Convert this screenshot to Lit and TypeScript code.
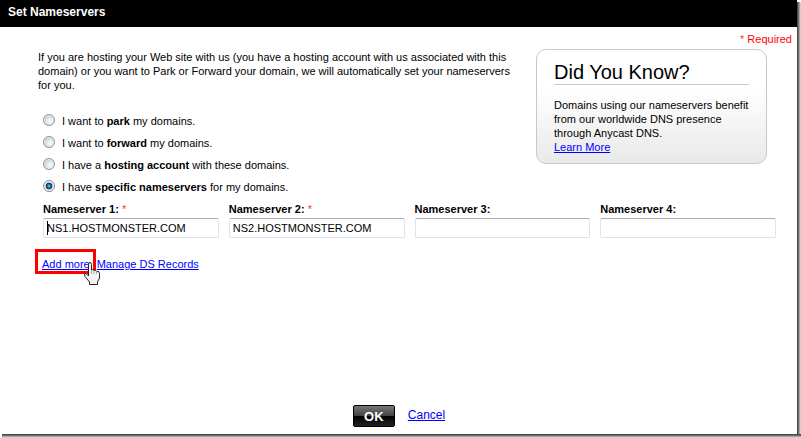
import { LitElement, html, css, nothing } from "lit";
import { customElement, state } from "lit/decorators.js";

interface Choice {
  id: string;
  before: string;
  strong: string;
  after: string;
}

interface Server {
  label: string;
  value: string;
  required: boolean;
}

const CHOICES: Choice[] = [
  { id: "park", before: "I want to ", strong: "park", after: " my domains." },
  { id: "forward", before: "I want to ", strong: "forward", after: " my domains." },
  { id: "hosting", before: "I have a ", strong: "hosting account", after: " with these domains." },
  { id: "specific", before: "I have ", strong: "specific nameservers", after: " for my domains." },
];

const SERVERS: Server[] = [
  { label: "Nameserver 1:", value: "NS1.HOSTMONSTER.COM", required: true },
  { label: "Nameserver 2:", value: "NS2.HOSTMONSTER.COM", required: true },
  { label: "Nameserver 3:", value: "", required: false },
  { label: "Nameserver 4:", value: "", required: false },
];

@customElement("app-root")
export class AppRoot extends LitElement {
  @state() private choice = "specific";

  static styles = css`
    :host {
      display: grid;
      grid-template: 1fr 4px / 1fr 4px;
      min-height: 100vh;
      background: #fff;
      color: #000;
      font: 11px/14px "Liberation Sans", Arial, sans-serif;
    }
    * {
      box-sizing: border-box;
    }
    a {
      color: #00f;
    }
    .window {
      display: flex;
      flex-direction: column;
      background: #fff;
    }
    .shade-right {
      margin-top: 2px;
      background: linear-gradient(90deg, #484848 0 1px, #6f6f6f 1px 2px, #a5a5a5 2px 3px, #d0d0d0 3px);
    }
    .shade-bottom {
      grid-column: 1 / 3;
      margin-left: 2px;
      background: linear-gradient(#484848 0 1px, #6f6f6f 1px 2px, #a5a5a5 2px 3px, #d0d0d0 3px);
    }
    .title {
      margin: 0;
      padding: 4px 8px 7px;
      background: #000;
      color: #fff;
      font-size: 12px;
      line-height: 16px;
    }
    .required-note {
      margin: 0;
      padding: 5px 5px 3px;
      text-align: right;
      color: #f00;
    }
    .star {
      color: #ff3c1e;
      font-weight: normal;
    }
    .top {
      display: flex;
      justify-content: space-between;
      gap: 16px;
      padding: 0 30px 0 38px;
    }
    .intro {
      flex: 1;
      max-width: 482px;
    }
    .intro p {
      margin: 1px 0 18px;
    }
    .choices {
      margin: 0;
      padding: 0 0 0 5px;
      border: 0;
    }
    .choice {
      display: flex;
      align-items: center;
      gap: 7px;
      height: 22px;
    }
    .choice input {
      appearance: none;
      flex: none;
      width: 12px;
      height: 12px;
      margin: 0 0 3px;
      border: 1px solid #8e8f8f;
      border-radius: 50%;
      background: radial-gradient(circle at 60% 60%, #f4f4f4 0 20%, #c4c8cc 70%);
      box-shadow: inset 0 0 0 1px #f4f4f4;
    }
    .choice input:checked {
      background: radial-gradient(circle at 50% 50%, #8fd8f5 0, #1d7ab4 22%, #0b2e4c 44%, #dfe3e6 52%);
    }
    .tip {
      flex: none;
      align-self: flex-start;
      width: 231px;
      padding: 10px 17px 9px;
      border: 1px solid #c8c8c8;
      border-radius: 10px;
      background: linear-gradient(#fff 35%, #e9e9e9);
    }
    .tip h2 {
      margin: 0 0 13px;
      border-bottom: 1px solid #c8c8c8;
      font-size: 20px;
      font-weight: normal;
      line-height: 24px;
    }
    .tip p {
      margin: 0;
    }
    .servers {
      display: grid;
      grid-template-columns: repeat(4, 1fr);
      gap: 10px;
      padding: 4px 21px 0 43px;
    }
    .server label {
      display: block;
      margin-bottom: 2px;
      font-weight: bold;
    }
    .server input {
      display: block;
      width: 100%;
      height: 20px;
      padding: 0 3px;
      border: 1px solid #dfe2e9;
      border-top-color: #a9abb2;
      border-radius: 2px;
      background: #fff;
      color: #000;
      font: 11px "Liberation Sans", Arial, sans-serif;
      outline: none;
    }
    .server:first-child input {
      caret-color: transparent;
      background: linear-gradient(#000, #000) 3px 2px / 1px 14px no-repeat #fff;
    }
    .links {
      display: flex;
      gap: 7px;
      padding: 19px 42px 0;
    }
    .more {
      position: relative;
    }
    .marker {
      position: absolute;
      inset: -8px -6px -3px -7px;
      border: 3px solid #f00;
      pointer-events: none;
    }
    .hand {
      position: absolute;
      top: 5px;
      right: -11px;
      pointer-events: none;
    }
    .actions {
      display: flex;
      justify-content: center;
      gap: 13px;
      margin-top: auto;
      padding: 0 0 7px 1px;
      font-size: 12px;
      line-height: 20px;
    }
    .ok {
      width: 42px;
      height: 22px;
      padding: 0;
      border: 1px solid #000;
      border-radius: 2px;
      background: linear-gradient(#777 0, #444 48%, #000 50%, #222 100%);
      color: #fff;
      font: bold 13px "Liberation Sans", Arial, sans-serif;
    }
  `;

  render() {
    return html`
      <main class="window">
        <h1 class="title">Set Nameservers</h1>
        <p class="required-note"><span class="star">*</span> Required</p>
        <div class="top">
          <div class="intro">
            <p>
              If you are hosting your Web site with us (you have a hosting account with us associated with this
              domain) or you want to Park or Forward your domain, we will automatically set your nameservers for you.
            </p>
            <fieldset class="choices" aria-label="Nameserver options">
              ${CHOICES.map(
                (c) => html`
                  <label class="choice">
                    <input
                      type="radio"
                      name="mode"
                      .checked=${this.choice === c.id}
                      @change=${() => (this.choice = c.id)}
                    />
                    <span>${c.before}<b>${c.strong}</b>${c.after}</span>
                  </label>
                `,
              )}
            </fieldset>
          </div>
          <aside class="tip">
            <h2>Did You Know?</h2>
            <p>
              Domains using our nameservers benefit<br />
              from our worldwide DNS presence<br />
              through Anycast DNS.
            </p>
            <a href="#learn">Learn More</a>
          </aside>
        </div>
        <div class="servers">
          ${SERVERS.map(
            (s, i) => html`
              <div class="server">
                <label for="ns${i}">${s.label} ${s.required ? html`<span class="star">*</span>` : nothing}</label>
                <input id="ns${i}" type="text" .value=${s.value} />
              </div>
            `,
          )}
        </div>
        <nav class="links">
          <span class="more">
            <a href="#add">Add more</a>
            <span class="marker"></span>
            <svg class="hand" width="18" height="24" viewBox="0 0 18 24" aria-hidden="true">
              <path
                d="M5.500 14V2.500Q5.500 .5 7 .5T8.500 2.500V8Q10 6.800 11 8.500 12.500 7.500 13.500 9.300 16.500 8.800 16.500 11.500V16L14.500 20V22.500H6.500V20L2 14.500Q.5 11.500 3 11.500Z"
                fill="#f4f4f4"
                stroke="#222"
              />
              <path d="M8.500 8V12M11 8.500V12M13.500 9.300V12" fill="none" stroke="#aaa" />
            </svg>
          </span>
          <a href="#ds">Manage DS Records</a>
        </nav>
        <div class="actions">
          <button class="ok" type="button">OK</button>
          <a href="#cancel">Cancel</a>
        </div>
      </main>
      <div class="shade-right"></div>
      <div class="shade-bottom"></div>
    `;
  }
}
